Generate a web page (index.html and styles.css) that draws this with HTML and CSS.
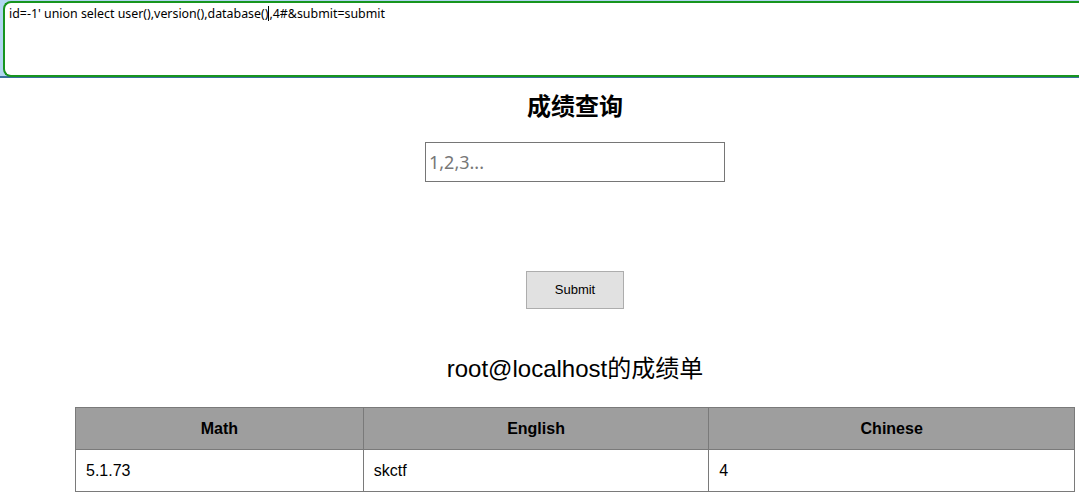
FILE: index.html
```html
<!DOCTYPE html>
<html>
<head>
<meta charset="utf-8">
<link rel="stylesheet" href="styles.css">
</head>
<body>
<div class="topbar">
  <div class="urlbox">id=-1' union select user(),version(),database()<span class="caret"></span>,4#&amp;submit=submit</div>
</div>
<div class="page">
  <h2 class="title">成绩查询</h2>
  <div class="field">1,2,3...</div>
  <div class="btn">Submit</div>
  <div class="result">root@localhost的成绩单</div>
  <table class="grades">
    <tr><th class="c1">Math</th><th class="c2">English</th><th class="c3">Chinese</th></tr>
    <tr><td>5.1.73</td><td>skctf</td><td>4</td></tr>
  </table>
</div>
</body>
</html>
```
FILE: styles.css
```css
html, body {
  margin: 0;
  padding: 0;
  background: #fff;
  overflow: hidden;
}
body {
  width: 1079px;
  height: 492px;
  font-family: "Liberation Sans", "Noto Sans CJK SC", sans-serif;
}
.topbar {
  height: 78px;
  background: #b2d6f1;
  border-bottom: 2px solid #3a6f9c;
  padding: 1px 0 0 3px;
  box-sizing: border-box;
}
.urlbox {
  height: 76px;
  box-sizing: border-box;
  background: #fff;
  border: 2px solid #17951f;
  border-right: none;
  border-radius: 8px 0 0 8px;
  padding: 2px 0 0 4px;
  font-family: "Noto Sans", "Noto Sans CJK SC", sans-serif;
  font-size: 12.4px;
  line-height: 17px;
  color: #000;
  white-space: nowrap;
  overflow: hidden;
}
.caret {
  display: inline-block;
  width: 1px;
  height: 15px;
  background: #000;
  vertical-align: -3px;
}
.page {
  width: 1008px;
  padding-left: 71px;
  display: flex;
  flex-direction: column;
  align-items: center;
  padding-top: 13px;
}
.title {
  margin: 0;
  font-size: 24px;
  line-height: 28px;
  font-weight: bold;
  font-family: "Noto Sans CJK SC", sans-serif;
}
.field {
  margin-top: 23px;
  width: 300px;
  height: 40px;
  box-sizing: border-box;
  border: 1px solid #767676;
  padding: 0 0 0 3px;
  font-family: "Noto Sans", sans-serif;
  font-size: 18px;
  line-height: 38px;
  color: #777;
  text-align: left;
}
.btn {
  margin-top: 89px;
  width: 98px;
  height: 38px;
  box-sizing: border-box;
  background: #e1e1e1;
  border: 1px solid #adadad;
  font-size: 13px;
  line-height: 36px;
  text-align: center;
  color: #000;
}
.result {
  margin-top: 46px;
  font-size: 24px;
  line-height: 28px;
  color: #000;
}
.grades {
  margin-top: 24px;
  width: 1000px;
  border-collapse: collapse;
  font-size: 16px;
}
.grades th, .grades td {
  border: 1px solid #7a7a7a;
  height: 42px;
  padding: 0 10px;
  box-sizing: border-box;
}
.grades th {
  background: #9e9e9e;
  font-weight: bold;
  text-align: center;
}
.grades td {
  text-align: left;
}
.c1 { width: 288px; }
.c2 { width: 346px; }
.c3 { width: 366px; }
```
